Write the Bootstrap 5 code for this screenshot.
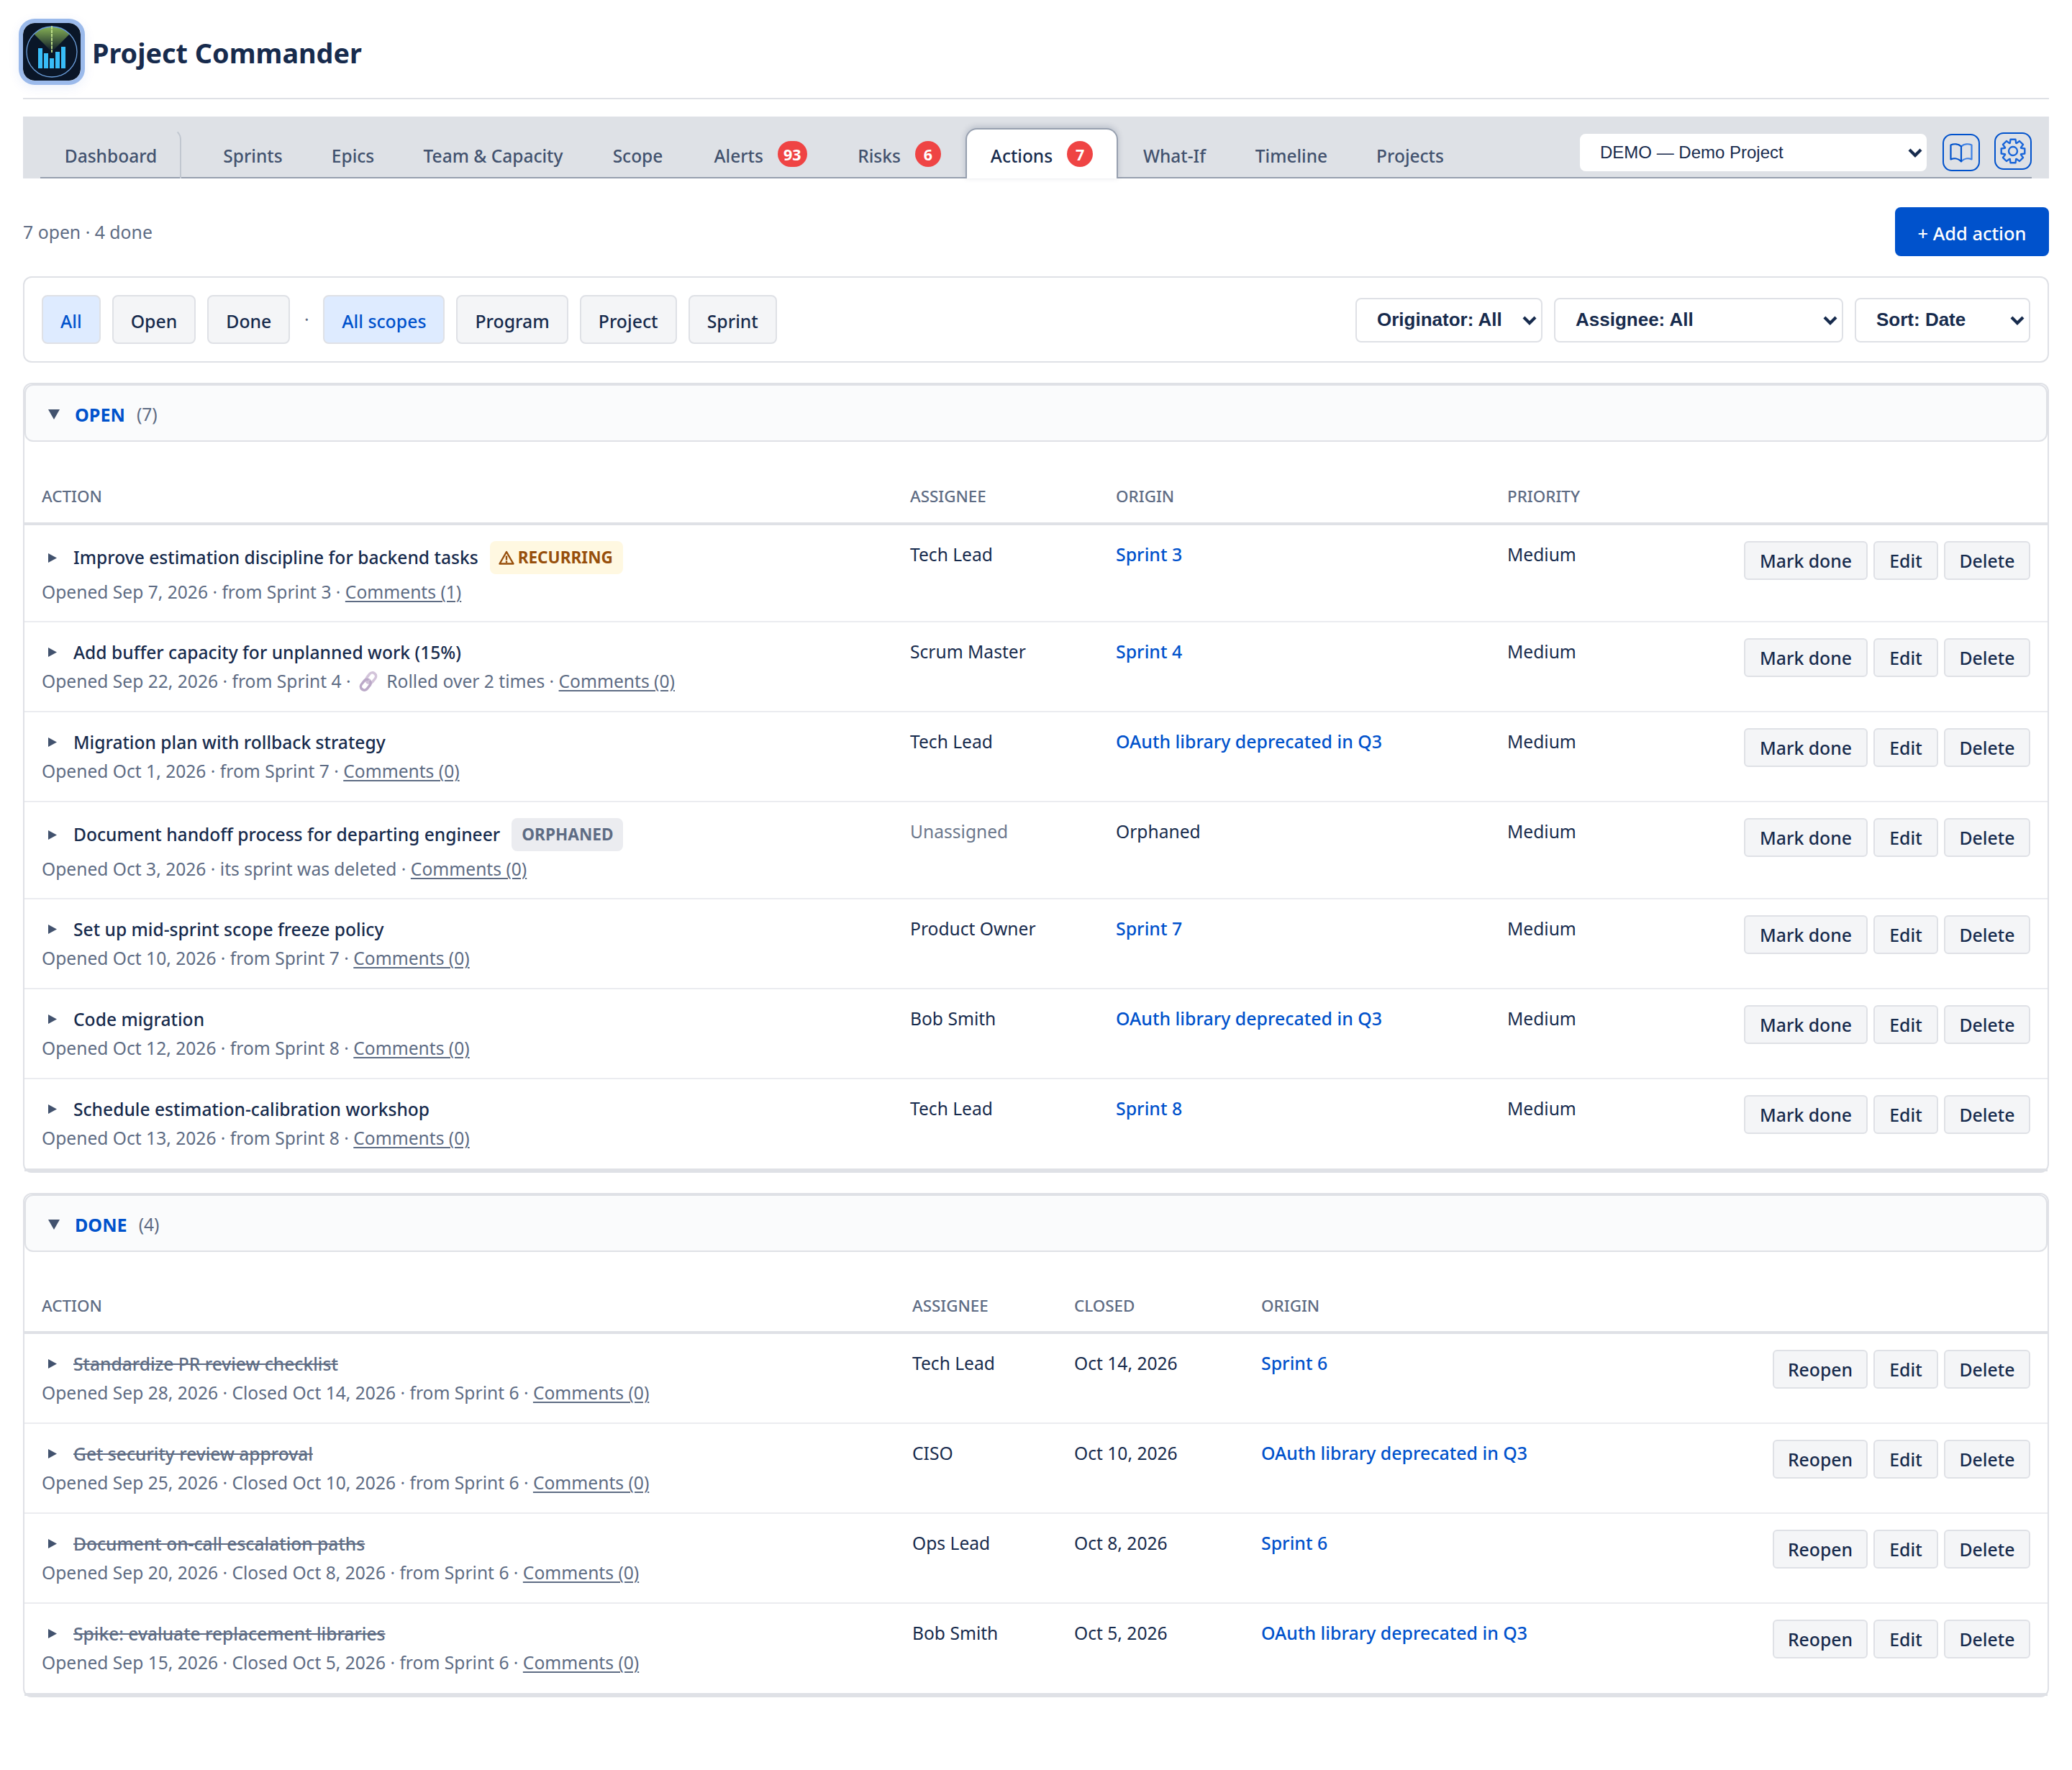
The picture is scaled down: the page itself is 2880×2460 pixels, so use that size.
<!DOCTYPE html>
<html lang="en">
<head>
    <meta charset="UTF-8">
    <meta name="viewport" content="width=device-width, initial-scale=1.0">
    <title>Project Commander - Actions</title>
    <link href="https://cdn.jsdelivr.net/npm/bootstrap@5.3.0/dist/css/bootstrap.min.css" rel="stylesheet">
    <style>
        :root {
            --ink: #172b4d;
            --ink-soft: #42526e;
            --ink-muted: #5e6c84;
            --line: #dfe1e6;
            --accent: #0052cc;
        }
        body {
            font-family: "Noto Sans", "Open Sans", sans-serif;
            font-size: 24.6px;
            color: var(--ink);
            background: #fff;
            padding: 32px;
        }
        a { color: var(--accent); }

        /* header */
        .app-header { padding-bottom: 24px; border-bottom: 2px solid var(--line); gap: 16px; }
        .app-logo {
            width: 80px; height: 80px; border-radius: 16px;
            box-shadow: 0 0 0 6px #9bbaeb, 0 4px 16px 6px rgba(0, 82, 204, .08);
        }
        .app-title { font-size: 37.8px; font-weight: 700; padding-top: 4px; line-height: 1.3; }

        /* tabs */
        .tab-bar { margin-top: 24px; height: 86px; padding: 0 24px; background: #dee1e6; }
        .tab-line { height: 86px; border-bottom: 2px solid #97a0af; }
        .tab-line .nav { margin-bottom: -2px; }
        .tab-line .nav-link {
            height: 70px; padding: 6px 0 0; border: 2px solid transparent; border-bottom: 0;
            font-size: 24.5px; font-weight: 500; color: var(--ink-soft); white-space: nowrap;
        }
        .tab-line .nav-link.active {
            background: #fff; color: var(--ink); border-color: #97a0af;
            border-radius: 16px 16px 0 0; box-shadow: 0 -2px 8px rgba(9, 30, 66, .18);
        }
        .tab-line .tab-home { border-right-color: #c1c7d0; border-top-right-radius: 16px; margin-right: 24px; }
        .tab-count {
            min-width: 36px; height: 36px; padding: 0 8px; margin: -7px 0 0 20px; border-radius: 18px;
            background: #ef4444; color: #fff; font-size: 21.5px; font-weight: 700; line-height: 38px; text-align: center;
        }
        .tab-tools { margin-top: 24px; }
        .tool-btn { width: 52px; height: 52px; border: 2px solid var(--accent); border-radius: 13px; }
        .tool-btn svg { width: 40px; height: 40px; }
        .tool-gear { margin: -2px 0 0 20px; }

        /* selects */
        .form-select {
            font-family: "Liberation Sans", Arial, sans-serif; color: var(--ink);
            border: 2px solid var(--line); border-radius: 8px; padding: 0 0 0 28px;
            background-image: url("data:image/svg+xml,%3csvg xmlns='http://www.w3.org/2000/svg' viewBox='0 0 20 13'%3e%3cpath fill='none' stroke='%23172b4d' stroke-width='4.2' d='M2 2l8 8 8-8'/%3e%3c/svg%3e");
            background-size: 20px 13px; background-position: right 6px center;
        }
        .project-select { width: 482px; height: 52px; font-size: 24px; padding-left: 26px; border-color: #fff; background-position: right 4px center; margin-right: 22px; }
        .filter-select { height: 62px; margin-top: 2px; padding-bottom: 1px; font-size: 26px; font-weight: 700; }
        .w-origin { width: 260px; }
        .w-assign { width: 402px; }
        .w-sort { width: 244px; }

        /* summary + filters */
        .summary { margin-top: 40px; height: 68px; color: var(--ink-muted); }
        .summary span { font-size: 24.8px; padding-top: 1px; }
        .btn-add {
            width: 214px; height: 68px; padding: 4px 0 0; border-radius: 8px; border: 0;
            background: var(--accent); color: #fff; font-size: 25.4px; font-weight: 500;
        }
        .panel { border: 2px solid var(--line); border-radius: 12px; margin-top: 28px; }
        .filters { height: 120px; padding: 0 24px; gap: 16px; }
        .filters .btn {
            height: 68px; padding: 5px 24px 0; border: 2px solid var(--line); border-radius: 8px;
            background: #f4f5f7; color: var(--ink); font-size: 24.8px; font-weight: 500;
        }
        .filters .btn.active { background: #deebff; color: var(--accent); border-color: var(--line); }
        .filters .sep { width: 14px; text-align: center; color: var(--ink-muted); }

        /* sections */
        .panel-head {
            height: 80px; padding: 4px 0 0 31px; border: 2px solid var(--line); border-radius: 12px; background: #fafbfc;
        }
        .panel-head h2 { font-size: 25.1px; font-weight: 700; color: var(--accent); margin: 0 16px 0 21px; }
        .panel-head span { color: var(--ink-muted); }
        .action-table { table-layout: fixed; border-collapse: separate; border-spacing: 0; --bs-table-bg: transparent; --bs-table-color: var(--ink); color: var(--ink); }
        .action-table > thead > tr > th {
            height: 116px; padding: 0 24px 21px; vertical-align: bottom; border-bottom: 4px solid var(--line);
            font-size: 22.4px; font-weight: 500; line-height: 30px; color: var(--ink-muted);
        }
        .done-table > thead > tr > th { height: 114px; padding-bottom: 20px; }
        .action-table > tbody > tr > td {
            height: 125px; padding: 22px 24px 0; line-height: 37px; border-bottom: 2px solid #ebecf0; white-space: nowrap;
        }
        .action-table > tbody > tr.flagged > td { height: 135px; }
        .action-table > tbody > tr:last-child > td { height: 128px; border-bottom: 4px solid var(--line); }
        .action-table td a { font-size: 24.9px; font-weight: 500; text-decoration: none; }
        .item-title { height: 38px; padding-left: 9px; font-weight: 500; }
        .item-title svg { width: 12px; height: 13px; margin: 0 23px 0 0; fill: var(--ink-soft); }
        .flagged .item-title { height: 46px; margin-bottom: 3px; }
        .flagged .item-title > span { margin-top: -1px; }
        .done-table .item-title span { color: var(--ink-muted); text-decoration: line-through; text-decoration-thickness: 2px; }
        .item-meta { line-height: 43px; color: var(--ink-muted); }
        .item-meta u { text-decoration-thickness: 2px; text-underline-offset: 3px; }
        .item-meta .link-icon { width: 28px; height: 28px; margin: -4px 5px 0 4px; }
        .flag { height: 46px; padding: 0 14px; margin-left: 16px; border-radius: 8px; font-size: 22.6px; font-weight: 700; line-height: 46px; }
        .flag-recurring { background: #fff8e1; color: #974f0c; padding-left: 12px; }
        .flag-recurring svg { width: 22px; height: 20px; margin: -3px 5px 0 0; fill: none; }
        .flag-orphaned { background: #ebecf0; color: var(--ink-muted); }
        .row-actions { gap: 8px; }
        .row-actions .btn {
            width: 120px; height: 54px; padding: 2px 0 0; border: 2px solid var(--line); border-radius: 6px;
            background: #f4f5f7; color: var(--ink); font-size: 24.8px; font-weight: 500;
        }
        .row-actions .btn-edit { width: 90px; }
        .row-actions .btn-mark { width: 172px; }
        .row-actions .btn-reopen { width: 132px; }
    </style>
</head>
<body>
    <svg class="d-none">
        <symbol id="caret" viewBox="0 0 12 13"><path d="M0 0L12 6.5L0 13z"/></symbol>
    </svg>

    <header class="app-header d-flex align-items-center">
        <svg class="app-logo" viewBox="0 0 80 80">
            <defs>
                <linearGradient id="sweep" x1="0" y1="0" x2="0" y2="1">
                    <stop offset="0" stop-color="#86b155"/>
                    <stop offset="1" stop-color="#0a1628"/>
                </linearGradient>
            </defs>
            <rect width="80" height="80" rx="16" fill="#0a1628"/>
            <path d="M40 40L15.5 15.5A34.6 34.6 0 0 1 64.5 15.5z" fill="url(#sweep)"/>
            <circle cx="40" cy="40" r="35" fill="none" stroke="#6c9fdc" stroke-width="1.3"/>
            <path d="M40 4V41" stroke="#c5e68f" stroke-width="1.8" stroke-dasharray="4.5 1"/>
            <path d="M21 35h6v28h-6zM29 42h6v21h-6zM37 49h6v14h-6zM45 40h6v23h-6zM53 33h6v30h-6z" fill="#38bdf8"/>
        </svg>
        <h1 class="app-title mb-0">Project Commander</h1>
    </header>

    <div class="tab-bar">
        <div class="tab-line d-flex align-items-end">
            <nav class="nav flex-nowrap">
                <a class="nav-link tab-home d-flex align-items-center justify-content-center" style="width:196px" href="#">Dashboard</a>
                <a class="nav-link d-flex align-items-center justify-content-center" style="width:151px" href="#">Sprints</a>
                <a class="nav-link d-flex align-items-center justify-content-center" style="width:127px" href="#">Epics</a>
                <a class="nav-link d-flex align-items-center justify-content-center" style="width:263px" href="#">Team &amp; Capacity</a>
                <a class="nav-link d-flex align-items-center justify-content-center" style="width:139px" href="#">Scope</a>
                <a class="nav-link d-flex align-items-center justify-content-center" style="width:202px" href="#">Alerts<span class="tab-count">93</span></a>
                <a class="nav-link d-flex align-items-center justify-content-center" style="width:184px" href="#">Risks<span class="tab-count">6</span></a>
                <a class="nav-link active d-flex align-items-center justify-content-center" style="width:212px" href="#">Actions<span class="tab-count">7</span></a>
                <a class="nav-link d-flex align-items-center justify-content-center" style="width:157px" href="#">What-If</a>
                <a class="nav-link d-flex align-items-center justify-content-center" style="width:168px" href="#">Timeline</a>
                <a class="nav-link d-flex align-items-center justify-content-center" style="width:162px" href="#">Projects</a>
            </nav>
            <div class="tab-tools d-flex ms-auto align-self-start">
                <select class="form-select project-select"><option>DEMO — Demo Project</option></select>
                <a class="tool-btn d-flex align-items-center justify-content-center" href="#">
                    <svg viewBox="-20 -20 40 40" fill="none" stroke-width="2.2" stroke-linejoin="round">
                        <path stroke="#3b7fe4" d="M0-8.5C4-12.2 10-12.5 14.5-10.5V9.5C10 7.6 4 8 0 12.5"/>
                        <path stroke="#0052cc" d="M0-8.5C-4-12.2-10-12.5-14.5-10.5V9.5C-10 7.6-4 8 0 12.5z"/>
                    </svg>
                </a>
                <a class="tool-btn tool-gear d-flex align-items-center justify-content-center" href="#">
                    <svg viewBox="-20 -20 40 40" fill="none" stroke="#1a66d9" stroke-width="2.4" stroke-linejoin="round">
                        <circle r="6"/>
                        <path d="M-4.2-11.2L-3.5-16.3H3.5L4.2-11.2L4.9-10.9L9.05-14L14-9.05L10.9-4.9L11.2-4.2L16.3-3.5V3.5L11.2 4.2L10.9 4.9L14 9.05L9.05 14L4.9 10.9L4.2 11.2L3.5 16.3H-3.5L-4.2 11.2L-4.9 10.9L-9.05 14L-14 9.05L-10.9 4.9L-11.2 4.2L-16.3 3.5V-3.5L-11.2-4.2L-10.9-4.9L-14-9.05L-9.05-14L-4.9-10.9z"/>
                    </svg>
                </a>
            </div>
        </div>
    </div>

    <div class="summary d-flex align-items-center justify-content-between">
        <span>7 open · 4 done</span>
        <button class="btn btn-primary btn-add">+ Add action</button>
    </div>

    <div class="panel filters d-flex align-items-center">
        <button class="btn active">All</button>
        <button class="btn">Open</button>
        <button class="btn">Done</button>
        <span class="sep">·</span>
        <button class="btn active">All scopes</button>
        <button class="btn">Program</button>
        <button class="btn">Project</button>
        <button class="btn">Sprint</button>
        <select class="form-select filter-select w-origin ms-auto"><option>Originator: All</option></select>
        <select class="form-select filter-select w-assign"><option>Assignee: All</option></select>
        <select class="form-select filter-select w-sort"><option>Sort: Date</option></select>
    </div>

    <!-- Open actions -->
    <section class="panel">
        <div class="panel-head d-flex align-items-center">
            <svg width="16" height="14" viewBox="0 0 16 14" fill="#42526e"><path d="M0 0H16L8 14z"/></svg>
            <h2>OPEN</h2><span>(7)</span>
        </div>
        <table class="table action-table mb-0">
            <colgroup><col style="width:1207px"><col style="width:286px"><col style="width:544px"><col style="width:250px"><col></colgroup>
            <thead>
                <tr><th>ACTION</th><th>ASSIGNEE</th><th>ORIGIN</th><th>PRIORITY</th><th></th></tr>
            </thead>
            <tbody>
                <tr class="flagged">
                    <td>
                        <div class="item-title d-flex align-items-center"><svg><use href="#caret"/></svg><span>Improve estimation discipline for backend tasks</span>
                            <div class="flag flag-recurring"><svg viewBox="0 0 22 20" stroke="#974f0c" stroke-width="2.4" stroke-linejoin="round"><path d="M11 2L20.5 18.5H1.5zM11 7.5V13.5M11 14.5V17"/></svg>RECURRING</div>
                        </div>
                        <div class="item-meta">Opened Sep 7, 2026 · from Sprint 3 · <u>Comments (1)</u></div>
                    </td>
                    <td>Tech Lead</td>
                    <td><a href="#">Sprint 3</a></td>
                    <td>Medium</td>
                    <td><div class="row-actions d-flex justify-content-end"><button class="btn btn-mark">Mark done</button><button class="btn btn-edit">Edit</button><button class="btn">Delete</button></div></td>
                </tr>
                <tr>
                    <td>
                        <div class="item-title d-flex align-items-center"><svg><use href="#caret"/></svg><span>Add buffer capacity for unplanned work (15%)</span></div>
                        <div class="item-meta">Opened Sep 22, 2026 · from Sprint 4 ·
                            <svg class="link-icon" viewBox="0 0 28 28" fill="none" stroke-width="3.6"><g transform="rotate(-52 14 14)"><rect x="12" y="9" width="16" height="10" rx="5" stroke="#d3c4da"/><rect x="0" y="9" width="16" height="10" rx="5" stroke="#bba9c8"/><path d="M11 14H18" stroke="#cdbfd6" stroke-width="2"/></g></svg>
                            Rolled over 2 times · <u>Comments (0)</u></div>
                    </td>
                    <td>Scrum Master</td>
                    <td><a href="#">Sprint 4</a></td>
                    <td>Medium</td>
                    <td><div class="row-actions d-flex justify-content-end"><button class="btn btn-mark">Mark done</button><button class="btn btn-edit">Edit</button><button class="btn">Delete</button></div></td>
                </tr>
                <tr>
                    <td>
                        <div class="item-title d-flex align-items-center"><svg><use href="#caret"/></svg><span>Migration plan with rollback strategy</span></div>
                        <div class="item-meta">Opened Oct 1, 2026 · from Sprint 7 · <u>Comments (0)</u></div>
                    </td>
                    <td>Tech Lead</td>
                    <td><a href="#">OAuth library deprecated in Q3</a></td>
                    <td>Medium</td>
                    <td><div class="row-actions d-flex justify-content-end"><button class="btn btn-mark">Mark done</button><button class="btn btn-edit">Edit</button><button class="btn">Delete</button></div></td>
                </tr>
                <tr class="flagged">
                    <td>
                        <div class="item-title d-flex align-items-center"><svg><use href="#caret"/></svg><span>Document handoff process for departing engineer</span>
                            <div class="flag flag-orphaned">ORPHANED</div>
                        </div>
                        <div class="item-meta">Opened Oct 3, 2026 · its sprint was deleted · <u>Comments (0)</u></div>
                    </td>
                    <td><span style="color:#6b778c">Unassigned</span></td>
                    <td>Orphaned</td>
                    <td>Medium</td>
                    <td><div class="row-actions d-flex justify-content-end"><button class="btn btn-mark">Mark done</button><button class="btn btn-edit">Edit</button><button class="btn">Delete</button></div></td>
                </tr>
                <tr>
                    <td>
                        <div class="item-title d-flex align-items-center"><svg><use href="#caret"/></svg><span>Set up mid-sprint scope freeze policy</span></div>
                        <div class="item-meta">Opened Oct 10, 2026 · from Sprint 7 · <u>Comments (0)</u></div>
                    </td>
                    <td>Product Owner</td>
                    <td><a href="#">Sprint 7</a></td>
                    <td>Medium</td>
                    <td><div class="row-actions d-flex justify-content-end"><button class="btn btn-mark">Mark done</button><button class="btn btn-edit">Edit</button><button class="btn">Delete</button></div></td>
                </tr>
                <tr>
                    <td>
                        <div class="item-title d-flex align-items-center"><svg><use href="#caret"/></svg><span>Code migration</span></div>
                        <div class="item-meta">Opened Oct 12, 2026 · from Sprint 8 · <u>Comments (0)</u></div>
                    </td>
                    <td>Bob Smith</td>
                    <td><a href="#">OAuth library deprecated in Q3</a></td>
                    <td>Medium</td>
                    <td><div class="row-actions d-flex justify-content-end"><button class="btn btn-mark">Mark done</button><button class="btn btn-edit">Edit</button><button class="btn">Delete</button></div></td>
                </tr>
                <tr>
                    <td>
                        <div class="item-title d-flex align-items-center"><svg><use href="#caret"/></svg><span>Schedule estimation-calibration workshop</span></div>
                        <div class="item-meta">Opened Oct 13, 2026 · from Sprint 8 · <u>Comments (0)</u></div>
                    </td>
                    <td>Tech Lead</td>
                    <td><a href="#">Sprint 8</a></td>
                    <td>Medium</td>
                    <td><div class="row-actions d-flex justify-content-end"><button class="btn btn-mark">Mark done</button><button class="btn btn-edit">Edit</button><button class="btn">Delete</button></div></td>
                </tr>
            </tbody>
        </table>
    </section>

    <!-- Done actions -->
    <section class="panel">
        <div class="panel-head d-flex align-items-center">
            <svg width="16" height="14" viewBox="0 0 16 14" fill="#42526e"><path d="M0 0H16L8 14z"/></svg>
            <h2>DONE</h2><span>(4)</span>
        </div>
        <table class="table action-table done-table mb-0">
            <colgroup><col style="width:1210px"><col style="width:225px"><col style="width:260px"><col style="width:600px"><col></colgroup>
            <thead>
                <tr><th>ACTION</th><th>ASSIGNEE</th><th>CLOSED</th><th>ORIGIN</th><th></th></tr>
            </thead>
            <tbody>
                <tr>
                    <td>
                        <div class="item-title d-flex align-items-center"><svg><use href="#caret"/></svg><span>Standardize PR review checklist</span></div>
                        <div class="item-meta">Opened Sep 28, 2026 · Closed Oct 14, 2026 · from Sprint 6 · <u>Comments (0)</u></div>
                    </td>
                    <td>Tech Lead</td>
                    <td>Oct 14, 2026</td>
                    <td><a href="#">Sprint 6</a></td>
                    <td><div class="row-actions d-flex justify-content-end"><button class="btn btn-reopen">Reopen</button><button class="btn btn-edit">Edit</button><button class="btn">Delete</button></div></td>
                </tr>
                <tr>
                    <td>
                        <div class="item-title d-flex align-items-center"><svg><use href="#caret"/></svg><span>Get security review approval</span></div>
                        <div class="item-meta">Opened Sep 25, 2026 · Closed Oct 10, 2026 · from Sprint 6 · <u>Comments (0)</u></div>
                    </td>
                    <td>CISO</td>
                    <td>Oct 10, 2026</td>
                    <td><a href="#">OAuth library deprecated in Q3</a></td>
                    <td><div class="row-actions d-flex justify-content-end"><button class="btn btn-reopen">Reopen</button><button class="btn btn-edit">Edit</button><button class="btn">Delete</button></div></td>
                </tr>
                <tr>
                    <td>
                        <div class="item-title d-flex align-items-center"><svg><use href="#caret"/></svg><span>Document on-call escalation paths</span></div>
                        <div class="item-meta">Opened Sep 20, 2026 · Closed Oct 8, 2026 · from Sprint 6 · <u>Comments (0)</u></div>
                    </td>
                    <td>Ops Lead</td>
                    <td>Oct 8, 2026</td>
                    <td><a href="#">Sprint 6</a></td>
                    <td><div class="row-actions d-flex justify-content-end"><button class="btn btn-reopen">Reopen</button><button class="btn btn-edit">Edit</button><button class="btn">Delete</button></div></td>
                </tr>
                <tr>
                    <td>
                        <div class="item-title d-flex align-items-center"><svg><use href="#caret"/></svg><span>Spike: evaluate replacement libraries</span></div>
                        <div class="item-meta">Opened Sep 15, 2026 · Closed Oct 5, 2026 · from Sprint 6 · <u>Comments (0)</u></div>
                    </td>
                    <td>Bob Smith</td>
                    <td>Oct 5, 2026</td>
                    <td><a href="#">OAuth library deprecated in Q3</a></td>
                    <td><div class="row-actions d-flex justify-content-end"><button class="btn btn-reopen">Reopen</button><button class="btn btn-edit">Edit</button><button class="btn">Delete</button></div></td>
                </tr>
            </tbody>
        </table>
    </section>

    <script src="https://cdn.jsdelivr.net/npm/bootstrap@5.3.0/dist/js/bootstrap.bundle.min.js"></script>
</body>
</html>
